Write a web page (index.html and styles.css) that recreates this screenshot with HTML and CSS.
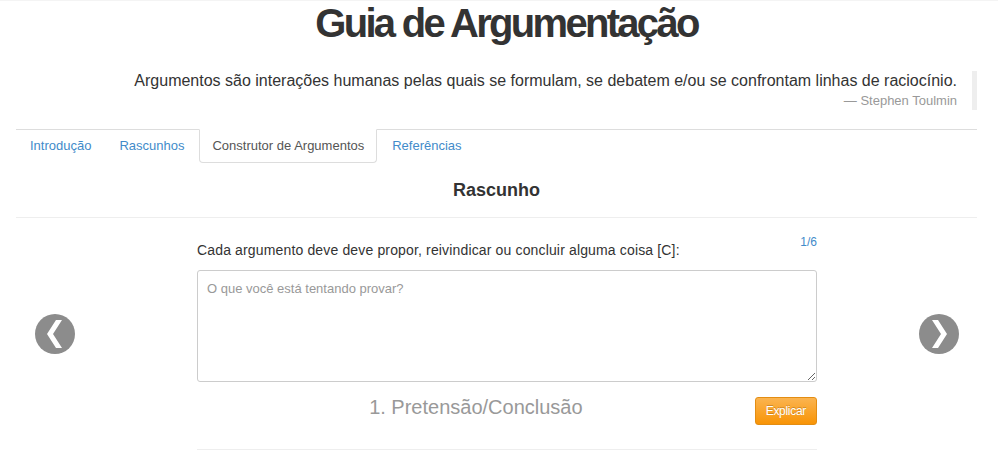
FILE: index.html
```html
<!DOCTYPE html>
<html lang="pt">
<head>
<meta charset="utf-8">
<title>Guia de Argumentação</title>
<link rel="stylesheet" href="styles.css">
</head>
<body>
<div class="container">
  <header class="page-header">
    <h1 class="title">Guia de Argumentação</h1>
    <blockquote class="quote">
      <p class="quote-text">Argumentos são interações humanas pelas quais se formulam, se debatem e/ou se confrontam linhas de raciocínio.</p>
      <p class="quote-cite">— Stephen Toulmin</p>
    </blockquote>
  </header>

  <ul class="tabs">
    <li><a href="#">Introdução</a></li>
    <li><a href="#">Rascunhos</a></li>
    <li class="active"><a href="#">Construtor de Argumentos</a></li>
    <li><a href="#">Referências</a></li>
  </ul>

  <h2 class="section-title">Rascunho</h2>
  <hr class="rule">

  <div class="carousel">
    <a class="arrow" href="#" aria-label="Anterior">
      <svg width="40" height="40" viewBox="0 0 40 40"><circle cx="20" cy="20" r="20" fill="#8c8c8c"/><polygon points="21,6 27,6 18,20 27,34 21,34 12,20" fill="#fff"/></svg>
    </a>
    <div class="step">
      <div class="step-head">
        <label class="step-label" for="claim">Cada argumento deve deve propor, reivindicar ou concluir alguma coisa [C]:</label>
        <span class="counter">1/6</span>
      </div>
      <textarea id="claim" class="field" placeholder="O que você está tentando provar?"></textarea>
      <div class="step-foot">
        <h3 class="step-title">1. Pretensão/Conclusão</h3>
        <button class="btn-warning" type="button">Explicar</button>
      </div>
      <hr class="step-rule">
    </div>
    <a class="arrow" href="#" aria-label="Próximo">
      <svg width="40" height="40" viewBox="0 0 40 40"><circle cx="20" cy="20" r="20" fill="#8c8c8c"/><polygon points="19,6 13,6 22,20 13,34 19,34 28,20" fill="#fff"/></svg>
    </a>
  </div>
</div>
</body>
</html>
```

FILE: styles.css
```css
html, body {
  margin: 0;
  padding: 0;
  background: #fff;
}
body {
  border-top: 1px solid #f4f4f4;
  font-family: "Liberation Sans", Arial, sans-serif;
  font-size: 13px;
  line-height: 18px;
  color: #333;
}
.container {
  margin: 0 21px 0 16px;
}
.page-header {
  display: flex;
  flex-direction: column;
}
.title {
  margin: 0;
  padding-left: 20px;
  text-align: center;
  font-size: 40px;
  line-height: 44px;
  font-weight: bold;
  letter-spacing: -2.7px;
  color: #333;
}
.quote {
  margin: 26px 0 19px;
  padding: 0 15px 0 0;
  border-right: 5px solid #eee;
  text-align: right;
}
.quote-text {
  margin: 0;
  font-size: 16px;
  line-height: 20px;
  color: #333;
}
.quote-cite {
  margin: 0;
  font-size: 13px;
  line-height: 19px;
  color: #999;
}
.tabs {
  list-style: none;
  margin: 0;
  padding: 0 0 0 1px;
  display: flex;
  border-top: 1px solid #ddd;
}
.tabs li {
  margin-right: 2px;
}
.tabs a {
  display: block;
  margin-top: -1px;
  padding: 7px 12px 7px;
  line-height: 18px;
  font-size: 13px;
  color: #428bca;
  text-decoration: none;
  border: 1px solid transparent;
  border-radius: 0 0 4px 4px;
}
.tabs .active a {
  color: #555;
  border-color: #ddd;
  border-top-color: #fff;
}
.section-title {
  margin: 17px 0 0;
  text-align: center;
  font-size: 18px;
  line-height: 20px;
  font-weight: bold;
  color: #333;
}
.rule {
  margin: 17px 0 0;
  border: 0;
  border-top: 1px solid #eee;
}
.carousel {
  display: flex;
  align-items: center;
  justify-content: space-between;
  padding: 0 18px 0 19px;
}
.arrow {
  display: block;
  width: 40px;
  height: 40px;
  line-height: 0;
}
.step {
  width: 620px;
  margin-left: 20px;
}
.step-head {
  display: flex;
  justify-content: space-between;
  align-items: flex-start;
  padding-top: 15px;
}
.step-label {
  margin-top: 8px;
  font-size: 14px;
  line-height: 18px;
  letter-spacing: 0.15px;
  color: #333;
}
.counter {
  font-size: 12px;
  line-height: 18px;
  color: #428bca;
}
.field {
  display: block;
  box-sizing: border-box;
  width: 100%;
  height: 112px;
  margin-top: 11px;
  padding: 8px 9px;
  border: 1px solid #ccc;
  border-radius: 3px;
  font-family: "Liberation Sans", Arial, sans-serif;
  font-size: 13px;
  line-height: 20px;
  color: #555;
}
.field::placeholder {
  color: #999;
}
.step-foot {
  display: flex;
  align-items: flex-start;
  margin-top: 15px;
}
.step-title {
  flex: 1;
  margin: 0;
  text-align: center;
  font-size: 20px;
  line-height: 20px;
  font-weight: normal;
  color: #999;
}
.btn-warning {
  height: 28px;
  padding: 0 10px;
  font-family: "Liberation Sans", Arial, sans-serif;
  font-size: 12px;
  letter-spacing: -0.3px;
  color: #fff;
  text-shadow: 0 -1px 0 rgba(0,0,0,0.2);
  background: linear-gradient(#fbb450, #f89406);
  border: 1px solid #e38d13;
  border-radius: 3px;
}
.step-rule {
  margin: 24px 0 0;
  border: 0;
  border-top: 1px solid #eee;
}
```
